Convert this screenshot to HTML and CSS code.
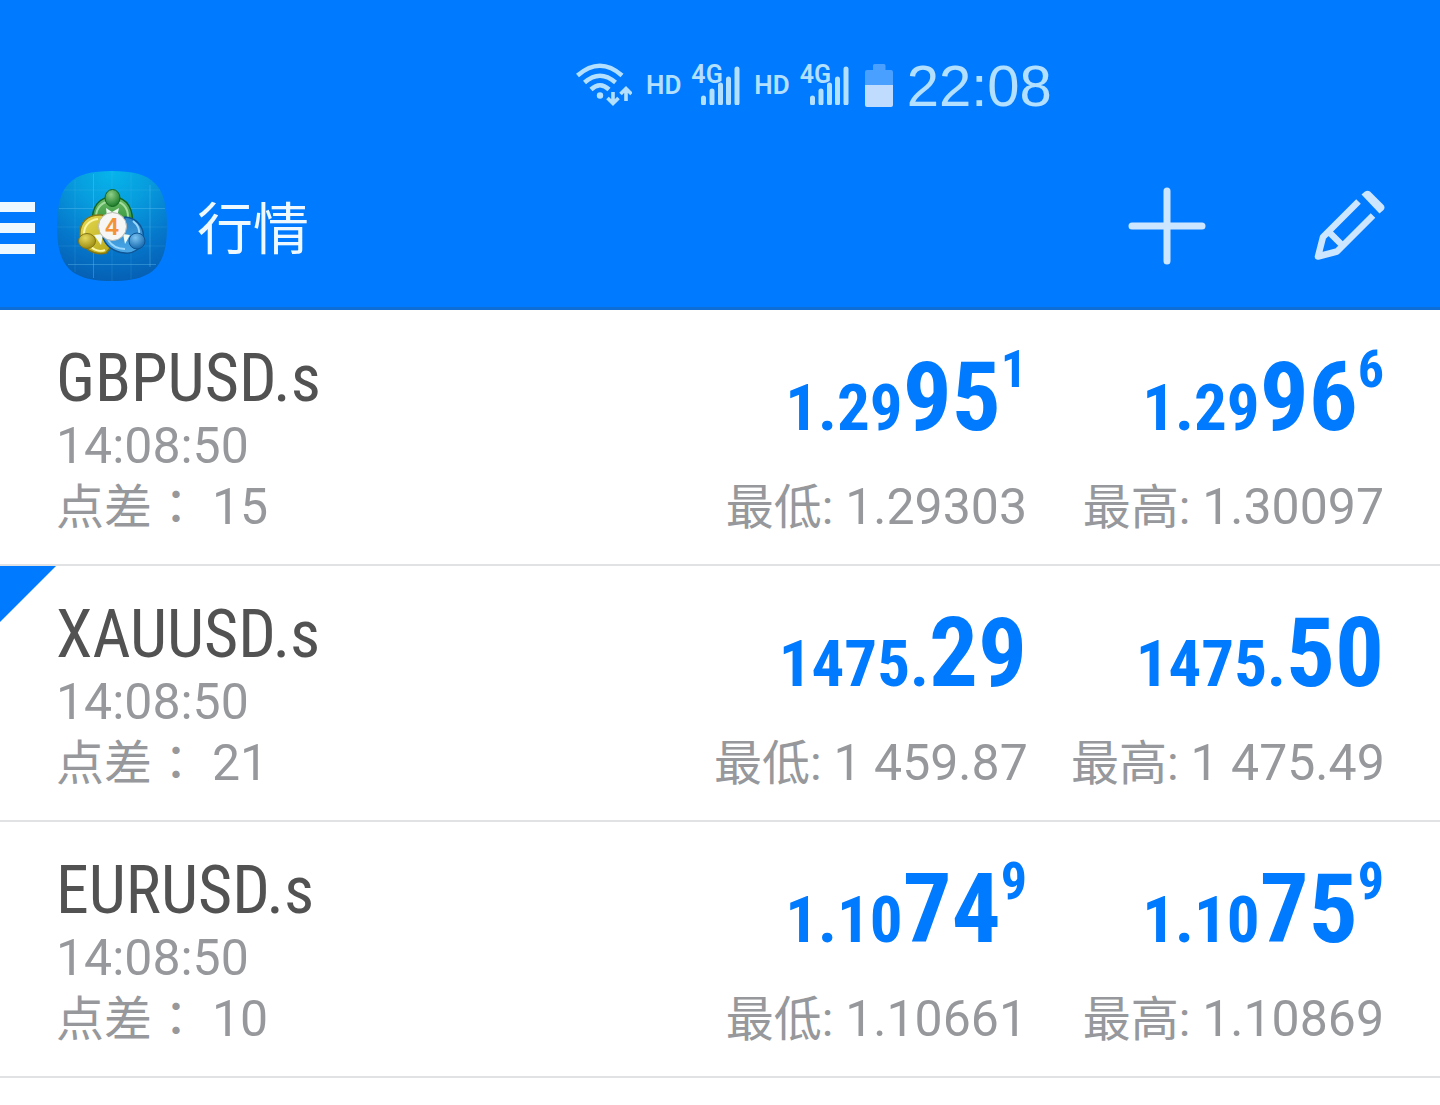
FILE: index.html
```html
<!DOCTYPE html>
<html lang="zh-CN">
  <head>
    <meta charset="utf-8">
    <meta name="viewport" content="width=device-width, initial-scale=1">
    <title>行情</title>
    <link rel="stylesheet" href="styles.css">
  </head>
  <body>
    <header class="header">
      <div class="status-bar">
        <svg class="wifi" width="56" height="44" viewBox="0 0 56 44" aria-hidden="true">
          <g fill="none" stroke="currentColor" stroke-width="4.500">
            <path d="M1.500 12.500Q24 -7 46 12.500"/>
            <path d="M8.500 19.500Q24 6 39.500 19.500"/>
            <path d="M15 26.500Q24 18 33 26.500"/>
            <path d="M37 29v11M31.500 35l5.500 5.500 5.500-5.500M50 38V26M44.500 31l5.500-5.500 5.500 5.500" stroke-width="3.600"/>
          </g>
          <circle cx="24" cy="32.500" r="3.200" fill="currentColor"/>
        </svg>
        <span class="hd">HD</span>
        <span class="signal">
          <span class="network">4G</span>
          <svg width="40" height="40" viewBox="0 0 40 40" aria-hidden="true">
            <path d="M3.500 33v5M12 26v12M20.500 20v18M28.500 14v24M37 4v34" stroke="currentColor" stroke-width="5" stroke-linecap="round"/>
          </svg>
        </span>
        <span class="hd">HD</span>
        <span class="signal">
          <span class="network">4G</span>
          <svg width="40" height="40" viewBox="0 0 40 40" aria-hidden="true">
            <path d="M3.500 33v5M12 26v12M20.500 20v18M28.500 14v24M37 4v34" stroke="currentColor" stroke-width="5" stroke-linecap="round"/>
          </svg>
        </span>
        <svg class="battery" width="28" height="43" viewBox="0 0 28 43" aria-hidden="true">
          <path d="M8 1.500Q8 0 9.500 0h9.500q1.500 0 1.500 1.500V6H26q2 0 2 2v13H0V8q0-2 2-2h6z" fill="#4aa0ff"/>
          <path d="M0 21h28v20q0 2-2 2H2q-2 0-2-2z" fill="#bfdcff"/>
        </svg>
        <time class="clock">22:08</time>
      </div>
      <div class="toolbar">
        <button class="menu" type="button" aria-label="菜单">
          <svg width="35" height="52" viewBox="0 0 35 52"><path d="M0 0h35v10H0zM0 21h35v10H0zM0 42h35v10H0z" fill="#eef8ff"/></svg>
        </button>
        <svg class="logo" width="110" height="110" viewBox="0 0 110 110" aria-hidden="true">
          <defs>
            <radialGradient id="tile" cx=".5" cy="0" r="1">
              <stop offset="0" stop-color="#06b5ec"/>
              <stop offset=".35" stop-color="#079cdd"/>
              <stop offset=".7" stop-color="#0578cc"/>
              <stop offset="1" stop-color="#0560b4"/>
            </radialGradient>
            <linearGradient id="green" x2="0" y2="1">
              <stop offset="0" stop-color="#6fbd6b"/>
              <stop offset="1" stop-color="#15801f"/>
            </linearGradient>
            <linearGradient id="yellow" x2="1" y2="1">
              <stop offset="0" stop-color="#e8dc55"/>
              <stop offset="1" stop-color="#b3a412"/>
            </linearGradient>
            <linearGradient id="blue" x2="0" y2="1">
              <stop offset="0" stop-color="#2a83c6"/>
              <stop offset="1" stop-color="#4aa8e8"/>
            </linearGradient>
            <radialGradient id="green-head" cx=".4" cy=".3" r=".7">
              <stop offset="0" stop-color="#8fd08a"/>
              <stop offset="1" stop-color="#1c7c28"/>
            </radialGradient>
            <radialGradient id="yellow-head" cx=".4" cy=".3" r=".7">
              <stop offset="0" stop-color="#e6da5c"/>
              <stop offset="1" stop-color="#9c8c14"/>
            </radialGradient>
            <radialGradient id="blue-head" cx=".4" cy=".3" r=".7">
              <stop offset="0" stop-color="#7cc4f2"/>
              <stop offset="1" stop-color="#1668ae"/>
            </radialGradient>
          </defs>
          <path d="M55 0C96 0 110 14 110 55S96 110 55 110 0 96 0 55 14 0 55 0z" fill="url(#tile)"/>
          <path d="M36.500 3v104M93 14v82M2 37.500h106M11 93.500h88" stroke="#6cc8f4" stroke-opacity=".35"/>
          <path d="M18 9v92M55 0v110M74 2v106M7 19h96M0 56h110M2 75h106" stroke="#6cc8f4" stroke-opacity=".15"/>
          <path d="M55.500 26C42 26 35 36 35.500 49L55 64l20-9c2-14-3-29-19.500-29z" fill="url(#green)" stroke="#12651e" stroke-width="1.500"/>
          <path d="M39 46c0-10 7-16 16.500-16S71 36 71 46" fill="none" stroke="#a4dca0" stroke-width="2"/>
          <path d="M45 44C30 43 22 52 23 65c1 12 14 20 26 17l10-12-8-20z" fill="url(#yellow)" stroke="#857612" stroke-width="1.500"/>
          <path d="M41 48c-9 1-14 7-14 15M33 75c4 4 10 6 15 4" fill="none" stroke="#fbf6a4" stroke-width="2"/>
          <path d="M68 46c14 1 20 13 18 23-2 9-10 14-18 13-12-1-20-8-23-18l17 2z" fill="url(#blue)" stroke="#0e5595" stroke-width="1.500"/>
          <path d="M76 50c5 4 7 9 6 14M51 69c4 6 10 9 17 9" fill="none" stroke="#9ad8ff" stroke-width="2"/>
          <path d="M49 37l6 4 7-4-2 9H50zM37 64l9-1-2 11zM66 63l7 1-5 9z" fill="#eefaf2"/>
          <ellipse cx="55.500" cy="27" rx="7.500" ry="8.500" fill="url(#green-head)" stroke="#12651e"/>
          <ellipse cx="30" cy="70" rx="8.500" ry="7.500" fill="url(#yellow-head)" stroke="#857612"/>
          <ellipse cx="80" cy="70" rx="8" ry="8" fill="url(#blue-head)" stroke="#0e5595"/>
          <circle cx="55.500" cy="55.500" r="14" fill="#f6f6f4" stroke="#b9b9b2"/>
          <text class="logo-number" x="55" y="64" text-anchor="middle">4</text>
        </svg>
        <h1 class="title">行情</h1>
        <button class="action" type="button" aria-label="添加">
          <svg width="78" height="78" viewBox="0 0 78 78"><path d="M39 4v70M4 39h70" stroke="currentColor" stroke-width="7" stroke-linecap="round"/></svg>
        </button>
        <button class="action" type="button" aria-label="编辑">
          <svg width="76" height="76" viewBox="0 0 76 76">
            <path d="M46.500 13.500L11 49 6 68.500 25 63.500 61 27.500M17 44L30 57" fill="none" stroke="currentColor" stroke-width="6.500" stroke-linejoin="round"/>
            <path d="M49.500 6.500l3.500-3q2.500-1.500 5 0L71.500 17q2 2.500 0 5l-4 3.500z" fill="currentColor"/>
          </svg>
        </button>
      </div>
    </header>
    <main>
      <ul class="quotes">
        <li class="quote">
          <div class="info">
            <h2 class="symbol">GBPUSD.s</h2>
            <time class="meta">14:08:50</time>
            <p class="meta"><span class="label">点差<span class="colon" lang="zh-TW">：</span> </span>15</p>
          </div>
          <div class="side">
            <p class="price">1.29<b>95</b><sup>1</sup></p>
            <p class="meta"><span class="label">最低: </span>1.29303</p>
          </div>
          <div class="side">
            <p class="price">1.29<b>96</b><sup>6</sup></p>
            <p class="meta"><span class="label">最高: </span>1.30097</p>
          </div>
        </li>
        <li class="quote marked">
          <div class="info">
            <h2 class="symbol">XAUUSD.s</h2>
            <time class="meta">14:08:50</time>
            <p class="meta"><span class="label">点差<span class="colon" lang="zh-TW">：</span> </span>21</p>
          </div>
          <div class="side">
            <p class="price">1475.<b>29</b></p>
            <p class="meta"><span class="label">最低: </span>1 459.87</p>
          </div>
          <div class="side">
            <p class="price">1475.<b>50</b></p>
            <p class="meta"><span class="label">最高: </span>1 475.49</p>
          </div>
        </li>
        <li class="quote">
          <div class="info">
            <h2 class="symbol">EURUSD.s</h2>
            <time class="meta">14:08:50</time>
            <p class="meta"><span class="label">点差<span class="colon" lang="zh-TW">：</span> </span>10</p>
          </div>
          <div class="side">
            <p class="price">1.10<b>74</b><sup>9</sup></p>
            <p class="meta"><span class="label">最低: </span>1.10661</p>
          </div>
          <div class="side">
            <p class="price">1.10<b>75</b><sup>9</sup></p>
            <p class="meta"><span class="label">最高: </span>1.10869</p>
          </div>
        </li>
      </ul>
    </main>
  </body>
</html>
```
FILE: styles.css
```css
* {
  box-sizing: border-box;
}
body {
  margin: 0;
  background: #fff;
  font-family: Roboto, "Noto Sans CJK SC", sans-serif;
}
h1, h2, p, ul {
  margin: 0;
  padding: 0;
  font-weight: 400;
}
svg {
  display: block;
}
button {
  margin: 0;
  padding: 0;
  border: 0;
  background: none;
  color: inherit;
}

/* Header */
.header {
  background: #007aff;
  border-bottom: 3px solid #0f6ed6;
}
.status-bar {
  display: flex;
  align-items: center;
  height: 170px;
  padding-left: 40%;
  color: #b3e0ff;
}
.hd {
  margin: 0 10px 0 14px;
  font-size: 26px;
  font-weight: 600;
}
.signal {
  position: relative;
  padding-left: 9px;
}
.network {
  position: absolute;
  left: 0;
  top: 0;
  font-size: 25px;
  font-weight: 600;
  line-height: 20px;
}
.battery {
  margin: 0 14px 0 16px;
}
.clock {
  font-family: "Liberation Sans", sans-serif;
  font-size: 58px;
}
.toolbar {
  display: flex;
  align-items: center;
  height: 112px;
  margin-bottom: 25px;
  padding-right: 52px;
  color: #cce6ff;
}
.menu {
  padding-top: 4px;
}
.logo {
  margin: 0 30px 0 22px;
}
.logo-number {
  font: bold 24px "Liberation Sans", sans-serif;
  fill: #f39237;
}
.title {
  flex: 1;
  padding-top: 8px;
  color: #eef8ff;
  font-size: 56px;
  line-height: 80px;
}
.action + .action {
  margin-left: 106px;
}

/* Quotes */
.quotes {
  list-style: none;
}
.quote {
  position: relative;
  display: grid;
  grid-template-columns: 1fr 313px 313px;
  column-gap: 44px;
  height: 256px;
  padding: 32px 56px 0;
  border-bottom: 2px solid #e1e2e4;
}
.marked::before {
  content: "";
  position: absolute;
  left: 0;
  top: 0;
  border-top: 56px solid #007aff;
  border-right: 56px solid transparent;
}
.symbol {
  color: #525252;
  font-family: "Roboto Condensed", "Liberation Sans Narrow", Roboto, sans-serif;
  font-size: 66px;
  line-height: 74px;
}
.meta {
  display: block;
  color: #96989c;
  font-size: 50px;
  line-height: 61px;
  white-space: nowrap;
}
.label {
  font-size: 48px;
}
/* the traditional form sits in the middle of its square */
.colon {
  font-family: Roboto, "Noto Sans CJK TC", sans-serif;
}
.side {
  text-align: right;
}
.price {
  height: 135px;
  color: #007aff;
  font-family: "Roboto Condensed", "Liberation Sans Narrow", Roboto, sans-serif;
  font-size: 65px;
  font-weight: 700;
  line-height: 110px;
  white-space: nowrap;
}
.price b {
  font-size: 97px;
  font-weight: 700;
}
.price sup {
  font-size: 52px;
  line-height: 0;
  vertical-align: 43px;
}
```
